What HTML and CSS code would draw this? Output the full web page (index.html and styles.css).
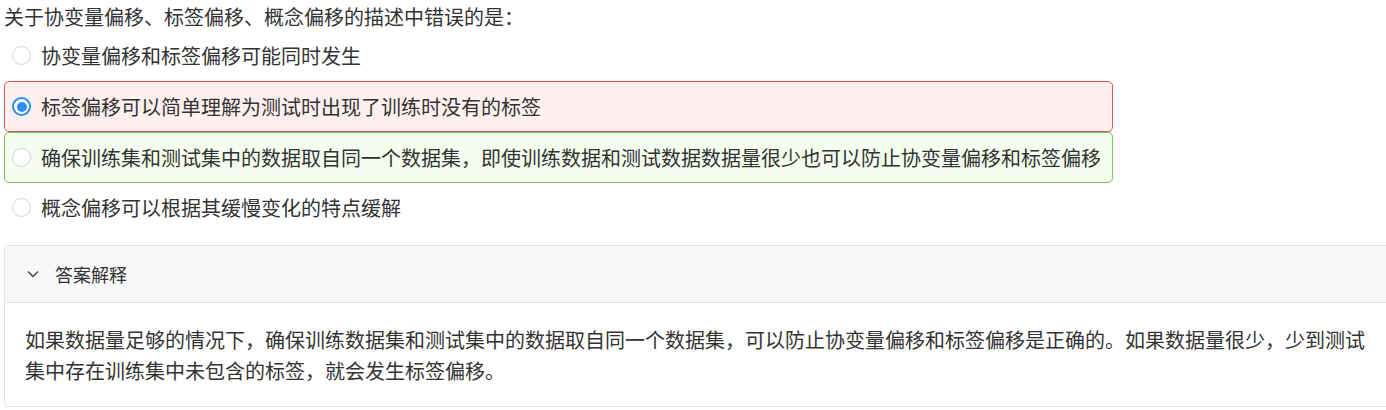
FILE: index.html
```html
<!DOCTYPE html>
<html lang="zh-CN">
<head>
<meta charset="utf-8">
<link rel="stylesheet" href="styles.css">
</head>
<body>
<div class="page">
  <div class="question">关于协变量偏移、标签偏移、概念偏移的描述中错误的是：</div>
  <div class="options">
    <div class="option"><span class="radio"></span><span class="label">协变量偏移和标签偏移可能同时发生</span></div>
    <div class="option wrong"><span class="radio checked"></span><span class="label">标签偏移可以简单理解为测试时出现了训练时没有的标签</span></div>
    <div class="option right"><span class="radio"></span><span class="label">确保训练集和测试集中的数据取自同一个数据集，即使训练数据和测试数据数据量很少也可以防止协变量偏移和标签偏移</span></div>
    <div class="option"><span class="radio"></span><span class="label">概念偏移可以根据其缓慢变化的特点缓解</span></div>
  </div>
  <div class="collapse">
    <div class="collapse-header">
      <svg class="chevron" width="12" height="8" viewBox="0 0 12 8"><path d="M1 1.5 L6 6.5 L11 1.5" fill="none" stroke="#444" stroke-width="1.4"/></svg>
      <span>答案解释</span>
    </div>
    <div class="collapse-body">如果数据量足够的情况下，确保训练数据集和测试集中的数据取自同一个数据集，可以防止协变量偏移和标签偏移是正确的。如果数据量很少，少到测试集中存在训练集中未包含的标签，就会发生标签偏移。</div>
  </div>
</div>
</body>
</html>
```
FILE: styles.css
```css
html, body {
  margin: 0;
  padding: 0;
  overflow: hidden;
  background: #fff;
}
.page {
  width: 1400px;
  padding: 4px 0 0 4px;
  font-family: "Microsoft YaHei", "Noto Sans CJK SC", "Noto Sans", sans-serif;
  font-size: 20px;
  color: #333;
}
.question {
  line-height: 26px;
}
.options {
  width: 1109px;
  margin-bottom: 12px;
}
.option {
  display: flex;
  align-items: center;
  gap: 10px;
  padding: 10px 7px;
  line-height: 29px;
  border: 1px solid transparent;
  border-radius: 5px;
}
.option:last-child {
  padding-top: 9px;
}
.option.wrong {
  border-color: #d9585a;
  background: #fff0f0;
}
.option.right {
  border-color: #7cc35a;
  background: #f4fdee;
}
.radio {
  flex: none;
  width: 19px;
  height: 19px;
  box-sizing: border-box;
  border: 1px solid #d6d6d6;
  border-radius: 50%;
  background: #fff;
  position: relative;
}
.radio.checked {
  border: 2px solid #2d8cf0;
}
.radio.checked::after {
  content: "";
  position: absolute;
  left: 2.5px;
  top: 2.5px;
  width: 10px;
  height: 10px;
  border-radius: 50%;
  background: #2d8cf0;
}
.collapse {
  width: 1390px;
  border: 1px solid #e1e1e1;
  border-radius: 4px;
}
.collapse-header {
  display: flex;
  align-items: center;
  height: 56px;
  padding-left: 22px;
  gap: 16px;
  background: #f8f8f8;
  border-bottom: 1px solid #e1e1e1;
  font-size: 18px;
  border-radius: 4px 4px 0 0;
}
.chevron {
  display: block;
}
.collapse-body {
  padding: 21px 20px 20px 20px;
  width: 1350px;
  line-height: 31px;
  font-size: 20px;
}
```
